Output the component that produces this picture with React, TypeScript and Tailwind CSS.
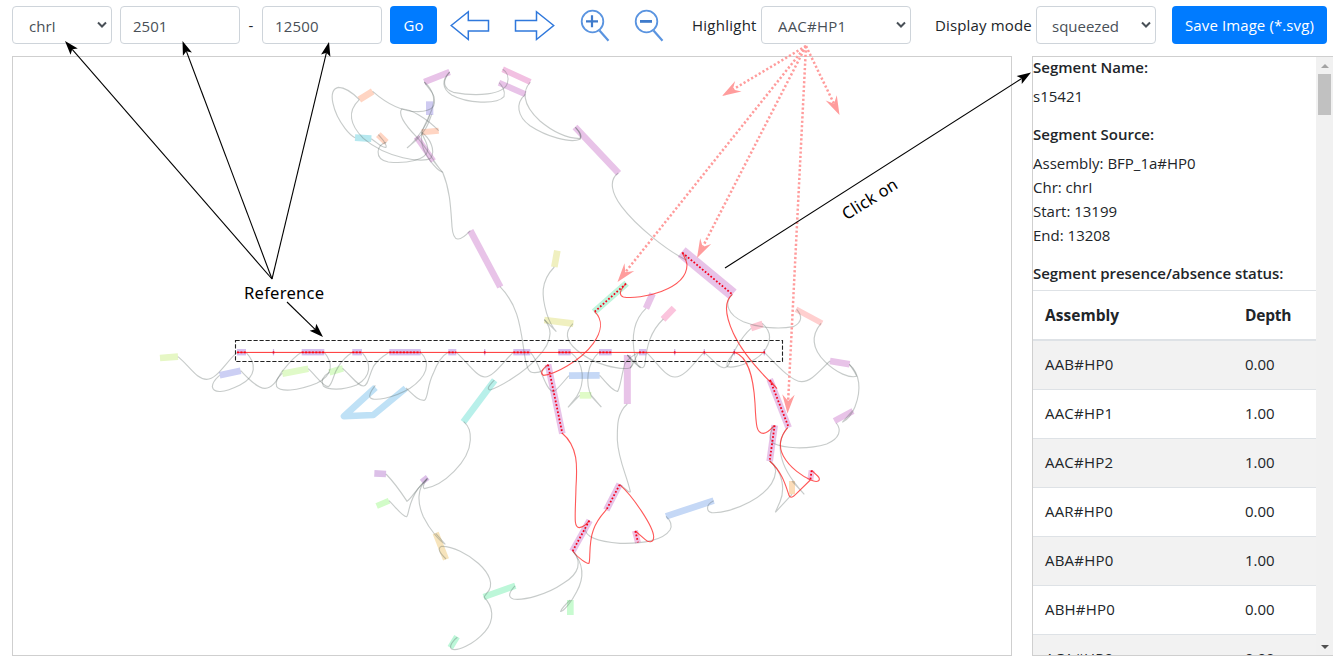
import React from "react";

type Bar = [number, number, number, number, string, number?];
type Region = { x: number; y: number; bars: Bar[]; links: string[]; red?: string[]; hits?: number[][] };

const PURPLE = "#e8c3e8";
const SALMON = "#ffd5c3";

/* Each region holds its geometry at three units to the pixel. */
const regions: Region[] = [
  {
    x: 310,
    y: 60,
    bars: [
      [343, 66, 419, 36, PURPLE],
      [578, 28, 661, 66, "#f2c0e2", 18],
      [567, 68, 646, 103, PURPLE, 18],
      [148, 119, 188, 94, SALMON],
      [359, 124, 359, 165, "#cfcbf1", 22],
      [335, 217, 386, 212, SALMON, 18],
      [135, 233, 184, 236, "#b6e8ef"],
      [205, 224, 229, 247, SALMON],
      [319, 230, 370, 303, PURPLE, 18],
      [481, 512, 571, 681, PURPLE],
    ],
    links: [
      "M188 94C240 140 290 155 325 155C370 153 378 138 372 110C365 90 350 80 343 66",
      "M148 119C125 95 100 82 85 82C50 90 70 160 105 205C115 218 125 228 135 233",
      "M148 119C110 155 120 195 160 235C230 295 340 310 362 295C378 270 360 235 335 217",
      "M184 236C205 250 215 265 228 262C232 250 215 236 205 224",
      "M229 247C200 252 190 298 235 306C290 312 350 300 353 270C355 250 340 235 335 217",
      "M386 212C350 175 300 145 275 147C262 165 290 200 319 230C345 255 380 320 398 337L370 303",
      "M359 165C355 190 315 245 291 264L319 240C350 210 355 190 365 163",
      "M343 66C370 90 378 115 365 150C350 190 330 210 335 240C335 280 380 330 398 337",
      "M398 337C420 390 422 440 426 500C430 550 450 545 481 512",
      "M419 36C395 65 400 85 430 97C500 110 580 105 592 70C598 50 590 35 578 28",
      "M419 36C395 60 395 85 425 105C470 130 560 135 582 110C587 92 575 75 567 68",
      "M661 66C640 90 632 130 690 183C740 225 785 235 810 236C818 225 805 212 796 202",
      "M646 103C615 130 622 170 660 197C710 230 780 250 810 238C818 225 805 212 796 202",
    ],
  },
  {
    x: 540,
    y: 60,
    bars: [[105, 201, 236, 340, PURPLE]],
    links: ["M235 339C205 360 215 400 245 440C290 500 380 570 438 600C445 595 435 585 427 580"],
  },
  {
    x: 150,
    y: 320,
    bars: [
      [30, 114, 84, 110, "#e6f7c5"],
      [209, 166, 272, 152, "#cccff4"],
      [397, 161, 475, 146, "#e0fac8"],
      [538, 157, 579, 145, "#d9fbc8"],
    ],
    links: [
      "M84 110C120 140 140 178 170 178C200 178 225 130 261 97",
      "M288 97C320 130 320 170 270 195C220 220 190 220 187 200C187 185 198 176 209 166",
      "M272 152C290 170 320 205 345 205C375 205 385 165 400 150C420 125 440 105 455 97",
      "M523 97C550 130 550 165 500 190C440 215 390 215 380 200C375 180 385 172 397 160",
      "M475 146C500 170 520 200 535 200C550 190 548 165 565 140C580 115 595 105 607 97",
      "M636 97C665 130 665 170 620 195C575 212 535 210 520 198C510 180 525 165 538 157",
      "M578 145C610 175 625 198 640 198C655 198 655 170 670 140C685 115 705 105 718 97",
      "M812 97C845 130 830 170 780 205C730 235 670 245 660 232C655 220 670 205 676 196",
      "M768 204C790 225 805 242 823 241C835 235 830 200 850 160C865 120 880 105 895 97",
    ],
  },
  {
    x: 430,
    y: 240,
    bars: [
      [382, 32, 373, 81, "#f0f0c0"],
      [343, 240, 430, 251, "#f0f0c0"],
      [492, 216, 590, 130, "#bff5dc"],
      [668, 161, 648, 205, PURPLE],
      [732, 204, 699, 238, "#fbc4dd"],
      [592, 345, 592, 492, PURPLE, 21],
      [417, 407, 509, 406, "#c5d8f6"],
      [449, 466, 484, 466, "#e0fbc8"],
      [194, 421, 100, 546, "#b8f0ea"],
      [354, 373, 397, 581, PURPLE],
    ],
    links: [
      "M210 140C260 190 270 250 280 320C290 400 300 398 315 398C335 398 345 385 354 374",
      "M373 81C330 125 335 170 350 220C358 245 370 265 379 275L343 239",
      "M343 239C370 270 365 310 320 355C280 400 210 440 180 450C168 445 180 435 193 420",
      "M101 545C118 560 122 575 121 600C118 665 40 738 -17 746C-25 740 -15 725 -7 715",
      "M429 251C405 275 405 300 440 330C490 375 570 390 600 384C615 370 600 355 592 345",
      "M79 337C110 365 140 411 165 411C190 411 220 365 250 337",
      "M301 337C330 365 345 455 372 455C390 440 400 425 417 407",
      "M509 406C530 430 550 455 563 454C572 440 575 400 585 370C600 350 615 343 627 337",
      "M422 337C465 370 465 430 440 470L414 502L449 466",
      "M507 337C470 370 465 430 485 470L514 501L484 466",
      "M648 205C605 245 605 300 615 350C618 370 625 380 632 383L592 345",
      "M700 237C660 275 650 320 645 370C642 390 630 385 610 365L592 345",
      "M600 384C612 375 615 350 627 337",
      "M649 337C680 365 705 411 735 411C765 411 790 370 822 337",
      "M592 492C560 520 562 560 562 600C565 660 590 705 601 755C598 760 585 745 570 734",
    ],
    red: [
      "M588 131C570 150 565 165 580 171C630 180 770 150 771 75C770 60 760 45 756 37",
      "M494 215C520 240 515 275 490 310C450 365 370 405 340 406C330 400 335 388 354 374",
    ],
    hits: [
      [494, 215, 588, 131],
      [354, 374, 397, 580],
    ],
  },
  {
    x: 620,
    y: 240,
    bars: [
      [185, 36, 338, 163, PURPLE, 37],
      [528, 208, 606, 250, "#ffcfcf", 17],
      [393, 264, 428, 252, "#fdc7d3"],
      [630, 363, 689, 373, PURPLE],
      [643, 543, 699, 513, PURPLE, 19],
      [449, 418, 506, 563, PURPLE],
    ],
    links: [
      "M337 163C310 190 325 225 370 245C420 265 480 268 520 260C550 245 545 225 530 208",
      "M603 250C570 290 580 330 615 365C650 400 690 415 710 409C705 395 695 382 688 373",
      "M688 373C720 400 725 450 705 500C695 525 680 540 667 547L698 512",
      "M427 250C455 275 455 305 430 337C400 370 340 385 322 380C315 365 335 350 343 337",
      "M393 265C360 295 335 345 328 370C320 390 305 385 290 372L253 337",
      "M433 337C470 375 515 425 545 425C575 425 600 390 630 363",
    ],
    red: [
      "M337 163C310 185 315 225 340 280C365 335 410 385 450 425L471 446L450 420",
      "M343 337C385 350 400 410 405 490C408 560 410 580 430 580C445 578 455 565 462 557",
    ],
    hits: [
      [187, 38, 337, 163],
      [450, 420, 506, 562],
    ],
  },
  {
    x: 540,
    y: 400,
    bars: [
      [704, 76, 689, 184, PURPLE],
      [239, 252, 199, 330, PURPLE],
      [149, 361, 97, 454, PURPLE],
      [285, 392, 294, 428, "#f2c0e2", 18],
      [815, 211, 811, 240, "#f0c4e4", 18],
      [756, 243, 756, 283, "#fbdcb8", 18],
      [378, 349, 521, 302, "#c5d8f6"],
      [91, 600, 91, 645, "#c8fbd0"],
    ],
    links: [
      "M889 69C905 90 900 115 860 132C800 150 730 145 700 130C685 115 690 95 704 76",
      "M135 385C135 410 170 425 240 430C310 432 370 420 390 390C398 375 390 360 378 349",
      "M521 302C495 315 500 335 515 338C570 342 700 290 707 215C706 200 700 190 689 183",
      "M689 183C730 215 735 270 720 305L706 337L756 283",
      "M743 83C715 115 715 150 730 190C745 230 780 270 793 283L756 243",
      "M98 453C130 490 135 530 110 575C95 605 70 635 62 634C65 625 80 610 91 600",
    ],
    red: [
      "M66 99C115 140 112 200 108 260C106 350 100 383 118 383C135 380 142 370 148 362",
      "M98 453C115 475 140 492 147 490C152 480 145 430 160 390C170 360 185 345 200 328",
      "M239 254C280 290 340 380 341 410C341 430 325 428 315 418L286 393",
      "M689 183C725 215 735 250 745 280C750 300 760 290 770 280L811 240",
      "M743 83C720 110 715 140 730 168C750 205 790 230 812 240C835 250 845 240 833 228L815 211",
    ],
    hits: [
      [704, 76, 689, 183],
      [239, 254, 200, 328],
      [148, 362, 98, 453],
      [286, 393, 294, 427],
      [815, 211, 811, 240],
    ],
  },
  {
    x: 330,
    y: 430,
    bars: [
      [133, 130, 168, 132, "#dcc0e8"],
      [140, 228, 177, 212, "#d2fcc8", 18],
      [275, 156, 293, 142, "#dcc0e8", 18],
      [317, 309, 348, 388, "#f7e4bc", 19],
      [461, 501, 556, 467, "#bdf7d9", 19],
      [381, 620, 361, 653, "#bdf7d9", 19],
    ],
    links: [
      "M168 132C200 165 225 205 231 214C245 205 260 175 292 146",
      "M177 212C200 235 220 262 230 260C238 250 235 215 265 175L292 145",
      "M290 148C260 175 262 220 280 260C300 300 330 335 346 343L317 310",
      "M348 387C330 370 320 355 335 349C400 348 520 440 470 490L462 501",
      "M462 501C490 530 495 570 465 605C430 645 380 665 365 657C355 650 370 630 382 622",
      "M730 365C755 395 750 430 700 460C650 495 580 512 550 507C530 500 540 485 555 468",
    ],
  },
];

const refBlocks = [
  [237, 246],
  [301.7, 324.3],
  [352.3, 362],
  [389.3, 420.7],
  [448.3, 456.3],
  [513.3, 530.3],
  [558.3, 570.7],
  [599, 611.7],
  [639, 646.3],
];
const refTicks = [273.5, 484.7, 674.7, 704.3, 734.3, 764.3];

function Graph() {
  return (
    <svg viewBox="13 57 998 598" width="998" height="598" className="block" fill="none">
      {regions.map((r) => (
        <g key={`b${r.x}-${r.y}`} transform={`translate(${r.x} ${r.y}) scale(0.33333)`}>
          {r.bars.map(([x1, y1, x2, y2, color, w], i) => (
            <line key={i} x1={x1} y1={y1} x2={x2} y2={y2} stroke={color} strokeWidth={w ?? 20} />
          ))}
        </g>
      ))}
      <path d="M375.5 387.5L344 416.3L373.3 415L405.7 388.3" stroke="#bfe1f6" strokeWidth="6.6" strokeLinejoin="round" />
      {refBlocks.map(([a, b]) => (
        <rect key={a} x={a} y={349} width={b - a} height={6.4} fill="#d3c0ee" />
      ))}
      {refTicks.map((x) => (
        <rect key={x} x={x - 0.6} y={349} width={1.2} height={6.4} fill="#c9b4e4" />
      ))}
      {regions.map((r) => (
        <g key={`l${r.x}-${r.y}`} transform={`translate(${r.x} ${r.y}) scale(0.33333)`}>
          {r.links.map((d, i) => (
            <path key={i} d={d} stroke="#55605e" strokeOpacity={0.33} strokeWidth={3.4} />
          ))}
          {(r.red ?? []).map((d, i) => (
            <path key={`r${i}`} d={d} stroke="#ff2020" strokeOpacity={0.75} strokeWidth={3.3} />
          ))}
        </g>
      ))}
      {regions.map((r) => (
        <g key={`h${r.x}-${r.y}`} transform={`translate(${r.x} ${r.y}) scale(0.33333)`}>
          {(r.hits ?? []).map(([x1, y1, x2, y2], i) => (
            <line key={i} x1={x1} y1={y1} x2={x2} y2={y2} stroke="#f4001c" strokeWidth={5.4} strokeDasharray="5.2 5.8" />
          ))}
        </g>
      ))}
      <path d="M237 352.4H765" stroke="#ff3030" strokeWidth="1" />
      {refBlocks.map(([a, b]) => (
        <path key={a} d={`M${a} 352.4H${b}`} stroke="#ff0010" strokeWidth="1.8" strokeDasharray="2 1.4" />
      ))}
      {refTicks.map((x) => (
        <rect key={x} x={x - 0.8} y={351.3} width={1.6} height={2.2} fill="#e81030" />
      ))}
    </svg>
  );
}

const blackArrows = [
  [272, 279, 65, 41],
  [272, 279, 182.5, 41],
  [272, 279, 329, 42],
  [287, 302, 323, 337],
  [725, 268, 1031, 72.5],
];
const pinkArrows = [
  [806, 46, 722, 96],
  [806, 46, 617.5, 282],
  [806, 46, 697, 258],
  [806, 46, 787.5, 413.5],
  [806, 46, 839.5, 115],
];

function Arrow({ p, len, half, notch, color, pink }: { p: number[]; len: number; half: number; notch: number; color: string; pink?: boolean }) {
  const [x1, y1, x2, y2] = p;
  const d = Math.hypot(x2 - x1, y2 - y1);
  const ux = (x2 - x1) / d;
  const uy = (y2 - y1) / d;
  const at = (along: number, side: number) => `${x2 - ux * along - uy * side},${y2 - uy * along + ux * side}`;
  return (
    <g>
      <line
        x1={x1}
        y1={y1}
        x2={x2 - ux * notch}
        y2={y2 - uy * notch}
        stroke={color}
        strokeWidth={pink ? 2.5 : 1.1}
        strokeDasharray={pink ? "2.2 2.2" : undefined}
      />
      <polygon points={`${x2},${y2} ${at(len, half)} ${at(notch, 0)} ${at(len, -half)}`} fill={color} />
    </g>
  );
}

function Annotations() {
  return (
    <svg viewBox="0 0 1342 667" width="1342" height="667" className="pointer-events-none absolute left-0 top-0" fill="none">
      <rect x="235.5" y="340.5" width="547" height="21" stroke="#222" strokeWidth="1.1" strokeDasharray="4.2 1.8" />
      {pinkArrows.map((p, i) => (
        <Arrow key={i} p={p} len={19} half={6.2} notch={12.5} color="#ff9c9c" pink />
      ))}
      {blackArrows.map((p, i) => (
        <Arrow key={i} p={p} len={14} half={4.8} notch={11} color="#000" />
      ))}
      <text x="244" y="298.5" fontSize="16.6" textLength="80" fill="#000" className="font-['Noto_Sans',sans-serif]">
        Reference
      </text>
      <text x="846.5" y="220.5" fontSize="16.6" textLength="62" fill="#000" transform="rotate(-32 846.5 220.5)" className="font-['Noto_Sans',sans-serif]">
        Click on
      </text>
    </svg>
  );
}

function Select({ value, box, pad }: { value: string; box: string; pad: string }) {
  return (
    <div className={`relative h-[38px] shrink-0 ${box}`}>
      <select className={`h-full w-full appearance-none rounded border border-[#ced4da] bg-white pt-px text-[#495057] ${pad}`} defaultValue={value}>
        <option>{value}</option>
      </select>
      <svg className="absolute right-[5px] top-[15px]" width="10" height="8" viewBox="0 0 10 8" fill="none">
        <path d="M1 1.5L5 5.5L9 1.5" stroke="#495057" strokeWidth="2" />
      </svg>
    </div>
  );
}

const inputClass = "h-[38px] w-[120px] shrink-0 rounded border border-[#ced4da] bg-white px-3 pt-px text-[#495057]";

function Toolbar() {
  return (
    <div className="flex h-14 items-start pl-3 pt-1.5 leading-6">
      <Select value="chrI" box="w-[100px]" pad="pl-4" />
      <input className={`ml-2 ${inputClass}`} defaultValue="2501" />
      <span className="flex h-[38px] w-[22px] items-center justify-center">-</span>
      <input className={`${inputClass} tracking-[0.2px]`} defaultValue="12500" />
      <button className="ml-2 h-[38px] w-[47px] shrink-0 rounded bg-[#007bff] text-white">Go</button>
      <svg className="ml-[13px] mt-1 shrink-0" width="40" height="32" viewBox="450 10 40 32" fill="none" stroke="#2f78dc" strokeWidth="1.5">
        <path d="M451.2 25.5L468.3 11.7V20.5H488.5V31H468.3V39.5Z" />
      </svg>
      <svg className="ml-6 mt-1 shrink-0" width="41" height="32" viewBox="514 10 41 32" fill="none" stroke="#2f78dc" strokeWidth="1.5">
        <path d="M553.7 25.5L536.5 11.7V20.5H515.5V31H536.5V39.5Z" />
      </svg>
      <svg className="ml-[25px] mt-[3px] shrink-0" width="30" height="34" viewBox="580 9 30 34" fill="none" stroke="#5a94e0">
        <circle cx="592.5" cy="21.5" r="10.8" strokeWidth="1.8" />
        <path d="M599.5 30.5L608.5 40.8" strokeWidth="2.2" />
        <path d="M586 21.3H598M592 15.3V27.3" stroke="#3f7bcb" strokeWidth="2.2" />
      </svg>
      <svg className="ml-6 mt-[3px] shrink-0" width="30" height="34" viewBox="634 9 30 34" fill="none" stroke="#5a94e0">
        <circle cx="646.5" cy="21.5" r="10.8" strokeWidth="1.8" />
        <path d="M653.5 30.5L662.5 40.8" strokeWidth="2.2" />
        <path d="M640 21.4H652" stroke="#3f7bcb" strokeWidth="2.8" />
      </svg>
      <span className="ml-[28px] w-[69px] shrink-0 whitespace-nowrap pt-[7px] tracking-[0.25px]">Highlight</span>
      <Select value="AAC#HP1" box="w-[150px]" pad="pl-4 tracking-[0.2px]" />
      <span className="ml-6 w-[101px] shrink-0 whitespace-nowrap pt-[7px] tracking-[0.15px]">Display mode</span>
      <Select value="squeezed" box="w-[120px]" pad="pl-[15px]" />
      <button className="ml-4 h-[38px] w-[155px] shrink-0 whitespace-nowrap rounded bg-[#007bff] text-white tracking-[0.1px]">
        Save Image (*.svg)
      </button>
    </div>
  );
}

const rows = [
  ["AAB#HP0", "0.00"],
  ["AAC#HP1", "1.00"],
  ["AAC#HP2", "1.00"],
  ["AAR#HP0", "0.00"],
  ["ABA#HP0", "1.00"],
  ["ABH#HP0", "0.00"],
  ["ACA#HP0", "0.00"],
];

const headingClass = "text-[15px] font-semibold leading-[19px]";

function Details() {
  return (
    <div className="flex h-[600px] w-[301px] border-y border-l border-[#cfcfcf]">
      <div className="h-full w-[283px] overflow-hidden leading-6">
        <h6 className={`pt-px ${headingClass}`}>Segment Name:</h6>
        <p className="mt-[7px]">s15421</p>
        <h6 className={`mt-[17px] ${headingClass}`}>Segment Source:</h6>
        <div className="mt-[7px]">
          <p>Assembly: BFP_1a#HP0</p>
          <p>Chr: chrI</p>
          <p>Start: 13199</p>
          <p>End: 13208</p>
        </div>
        <h6 className={`mt-[17px] tracking-[-0.04px] ${headingClass}`}>Segment presence/absence status:</h6>
        <div className="mt-[7px] flex h-[51px] border-b-2 border-t border-[#dee2e6] pl-3 pt-3 text-[15.5px] font-bold">
          <span className="w-[200px] tracking-[0.05px]">Assembly</span>
          <span className="tracking-[-0.2px]">Depth</span>
        </div>
        {rows.map(([name, depth], i) => (
          <div key={name} className={`flex h-[49px] border-b border-[#dee2e6] pl-3 pt-[11px] ${i % 2 ? "bg-white" : "bg-[#f2f2f2]"}`}>
            <span className="w-[200px] tracking-[0.2px]">{name}</span>
            <span>{depth}</span>
          </div>
        ))}
      </div>
      <div className="flex h-full w-[17px] flex-col items-center justify-between bg-[#f1f1f1] pt-[7px] pb-[6px]">
        <div className="flex flex-col items-center gap-[6px]">
          <svg width="8" height="4" viewBox="0 0 8 4">
            <path d="M0 4L4 0L8 4Z" fill="#a3a3a3" />
          </svg>
          <div className="h-[41px] w-[13px] bg-[#c1c1c1]" />
        </div>
        <svg width="8" height="4" viewBox="0 0 8 4">
          <path d="M0 0L4 4L8 0Z" fill="#505050" />
        </svg>
      </div>
    </div>
  );
}

export default function App() {
  return (
    <div className="relative h-[667px] w-[1342px] overflow-hidden bg-white font-['Open_Sans','Noto_Sans',sans-serif] text-[15px] text-[#212529]">
      <Toolbar />
      <div className="flex items-start gap-5 pl-3">
        <div className="h-[600px] w-[1000px] shrink-0 border border-[#cfcfcf]">
          <Graph />
        </div>
        <Details />
      </div>
      <Annotations />
    </div>
  );
}
